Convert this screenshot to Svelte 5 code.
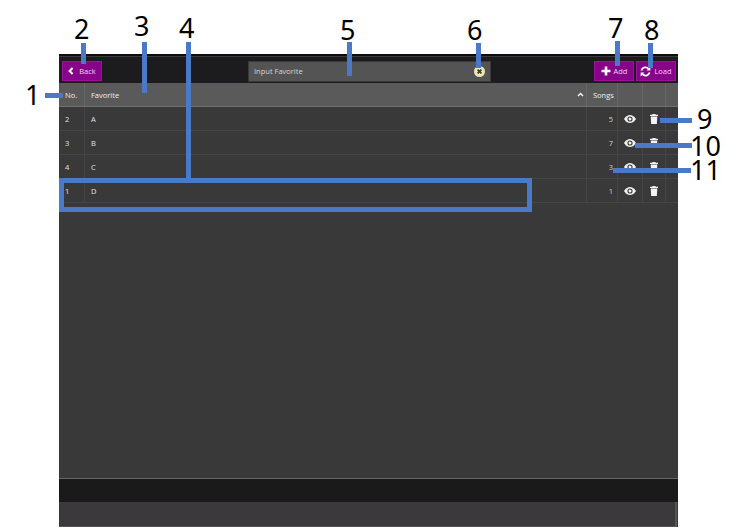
<script>
  const rows = [
    { no: 2, name: 'A', songs: 5 },
    { no: 3, name: 'B', songs: 7 },
    { no: 4, name: 'C', songs: 3 },
    { no: 1, name: 'D', songs: 1 }
  ];
  const callouts = [
    { n: '1', cls: 'n1' }, { n: '2', cls: 'n2' }, { n: '3', cls: 'n3' }, { n: '4', cls: 'n4' },
    { n: '5', cls: 'n5' }, { n: '6', cls: 'n6' }, { n: '7', cls: 'n7' }, { n: '8', cls: 'n8' },
    { n: '9', cls: 'n9' }, { n: '10', cls: 'n10' }, { n: '11', cls: 'n11' }
  ];
  const lines = ['l1', 'l2', 'l3', 'l4', 'l5', 'l6', 'l7', 'l8', 'l9', 'l10', 'l11'];
</script>

<div class="page">
  <div class="screen">
    <header class="toolbar">
      <button class="btn back">
        <svg width="6" height="8" viewBox="0 0 6 8"><path d="M4.6 1 L1.6 4 L4.6 7" fill="none" stroke="#fff" stroke-width="2"/></svg>
        Back
      </button>
      <div class="search">
        <span>Input Favorite</span>
        <svg class="clear" width="11" height="11" viewBox="0 0 11 11">
          <circle cx="5.5" cy="5.5" r="5.5" fill="#ece8b0"/>
          <path d="M3.6 3.6 L7.4 7.4 M7.4 3.6 L3.6 7.4" stroke="#3a3a3a" stroke-width="1.7"/>
        </svg>
      </div>
      <div class="actions">
        <button class="btn add">
          <svg width="10" height="10" viewBox="0 0 10 10"><path d="M5 0.5 V9.5 M0.5 5 H9.5" stroke="#fff" stroke-width="2.6"/></svg>
          Add
        </button>
        <button class="btn load">
          <svg width="11" height="11" viewBox="0 0 11 11">
            <path d="M1.4 4.4 A4.2 4.2 0 0 1 8.6 2.8 M9.6 6.6 A4.2 4.2 0 0 1 2.4 8.2" fill="none" stroke="#fff" stroke-width="1.8"/>
            <path d="M10.4 0.6 V4.4 H6.6 Z M0.6 10.4 V6.6 H4.4 Z" fill="#fff"/>
          </svg>
          Load
        </button>
      </div>
    </header>

    <div class="row head">
      <div class="c no">No.</div>
      <div class="c fav">
        Favorite
        <svg width="7" height="5" viewBox="0 0 7 5"><path d="M1 4 L3.5 1.5 L6 4" fill="none" stroke="#fff" stroke-width="1.4"/></svg>
      </div>
      <div class="c songs">Songs</div>
      <div class="c icon"></div>
      <div class="c icon2"></div>
      <div class="c end"></div>
    </div>

    {#each rows as r}
      <div class="row">
        <div class="c no">{r.no}</div>
        <div class="c fav">{r.name}</div>
        <div class="c songs num">{r.songs}</div>
        <div class="c icon">
          <svg width="12" height="8" viewBox="0 0 12 8">
            <path fill-rule="evenodd" fill="#f2f2f2" d="M0 4 C2 1 4 0 6 0 C8 0 10 1 12 4 C10 7 8 8 6 8 C4 8 2 7 0 4 Z M6 1.4 A2.6 2.6 0 1 0 6 6.6 A2.6 2.6 0 1 0 6 1.4 Z"/>
            <circle cx="6" cy="4" r="1.5" fill="#f2f2f2"/>
          </svg>
        </div>
        <div class="c icon2">
          <svg width="8" height="10" viewBox="0 0 8 10">
            <path fill="#f4f4f4" d="M2.6 0 H5.4 L5.8 0.8 H8 V2 H0 V0.8 H2.2 Z M0.7 2.6 H7.3 L6.8 10 H1.2 Z"/>
          </svg>
        </div>
        <div class="c end"></div>
      </div>
    {/each}

    <div class="body"></div>
    <div class="band"></div>
    <div class="foot"></div>
  </div>

  <div class="box"></div>
  {#each lines as l}
    <i class="line {l}"></i>
  {/each}
  {#each callouts as c}
    <span class="num-label {c.cls}">{c.n}</span>
  {/each}
</div>

<style>
  :global(body) {
    margin: 0;
    background: #fff;
  }
  .page {
    position: relative;
    width: 743px;
    height: 528px;
    overflow: hidden;
    padding: 54px 0 0 59px;
    box-sizing: border-box;
    font-family: "Open Sans", "Liberation Sans", sans-serif;
  }
  .screen {
    width: 619px;
    height: 473px;
    display: flex;
    flex-direction: column;
    background: #393939;
  }
  .toolbar {
    height: 29px;
    flex: none;
    box-sizing: border-box;
    border-top: 2px solid #0d0d0d;
    background: #1c1b1d;
    box-shadow: inset 0 1px 0 #3a3a3a;
    display: flex;
    align-items: center;
    padding: 3px 2px 0 3px;
  }
  .btn {
    height: 20px;
    padding: 0;
    border: 1px solid #a0109f;
    background: #86038a;
    color: #ecd8ec;
    font: 400 7.5px "Open Sans", sans-serif;
    display: flex;
    align-items: center;
    justify-content: center;
    gap: 3px;
    box-sizing: border-box;
  }
  .back {
    width: 40px;
    gap: 5px;
  }
  .search {
    width: 243px;
    height: 21px;
    margin-left: 146px;
    box-sizing: border-box;
    background: #545454;
    border: 1px solid #3a3a3a;
    color: #d4d4d4;
    font-size: 7.5px;
    display: flex;
    align-items: center;
    justify-content: space-between;
    padding: 0 5px 0 5px;
  }
  .actions {
    margin-left: auto;
    display: flex;
    gap: 2px;
  }
  .add,
  .load {
    width: 40px;
  }
  .row {
    display: grid;
    grid-template-columns: 26px 502px 31px 25px 23px 12px;
    height: 24px;
    flex: none;
    box-sizing: border-box;
    border-bottom: 1px solid #444;
    color: #e4e4e4;
    font-size: 7.5px;
  }
  .head {
    background: #5a5a5a;
    border-bottom-color: #707070;
    color: #f0f0f0;
  }
  .c {
    display: flex;
    align-items: center;
    padding-left: 6px;
    box-sizing: border-box;
    border-right: 1px solid #444;
  }
  .head .c {
    border-right-color: #666;
  }
  .fav {
    justify-content: space-between;
    padding-right: 2px;
  }
  .songs {
    padding: 0 4px 0 6px;
  }
  .num {
    justify-content: flex-end;
    color: #d0d0d0;
  }
  .icon,
  .icon2 {
    justify-content: center;
    padding: 0;
  }
  .end {
    border-right: 0;
  }
  .body {
    flex: 1;
  }
  .band {
    height: 24px;
    flex: none;
    box-sizing: border-box;
    background: #1a1a1a;
    border-top: 1px solid #666;
  }
  .foot {
    height: 25px;
    flex: none;
    box-sizing: border-box;
    background: #3b393c;
    border-right: 2px solid #555;
    margin-right: 1px;
    border-bottom: 1px solid #555;
  }
  .box {
    position: absolute;
    left: 59px;
    top: 178px;
    width: 473px;
    height: 34px;
    box-sizing: border-box;
    border: solid #4a79c8;
    border-width: 5px 5px 5px 5px;
  }
  .line {
    position: absolute;
    background: #4a79c8;
  }
  .l1 { left: 45px; top: 93px; width: 18px; height: 5px; }
  .l2 { left: 81px; top: 43px; width: 5px; height: 21px; }
  .l3 { left: 142px; top: 42px; width: 5px; height: 51px; }
  .l4 { left: 186px; top: 42px; width: 5px; height: 138px; }
  .l5 { left: 347px; top: 42px; width: 5px; height: 34px; }
  .l6 { left: 476px; top: 43px; width: 5px; height: 25px; }
  .l7 { left: 615px; top: 41px; width: 5px; height: 25px; }
  .l8 { left: 648px; top: 43px; width: 5px; height: 25px; }
  .l9 { left: 660px; top: 118px; width: 32px; height: 5px; }
  .l10 { left: 635px; top: 143px; width: 57px; height: 5px; }
  .l11 { left: 613px; top: 168px; width: 78px; height: 5px; }
  .num-label {
    position: absolute;
    font: 27px/24px "Noto Sans", sans-serif;
    color: #000;
    white-space: nowrap;
  }
  .n1 { left: 25px; top: 83px; }
  .n2 { left: 74px; top: 17px; }
  .n3 { left: 134px; top: 14px; }
  .n4 { left: 179px; top: 16px; }
  .n5 { left: 340px; top: 18px; }
  .n6 { left: 467px; top: 18px; }
  .n7 { left: 608px; top: 16px; }
  .n8 { left: 644px; top: 18px; }
  .n9 { left: 697px; top: 107px; }
  .n10 { left: 690px; top: 134px; }
  .n11 { left: 690px; top: 158px; }
</style>
